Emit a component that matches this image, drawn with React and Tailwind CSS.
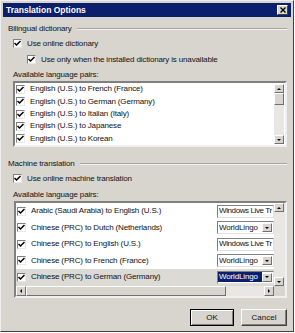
import React from "react";

const face = { fontFamily: '"Liberation Sans", Arial, sans-serif' };

const Check = ({ checked = true }) => (
  <span className="w-[9px] h-[9px] shrink-0 bg-white border border-t-[#808080] border-l-[#808080] border-b-[#e8e8e8] border-r-[#e8e8e8] flex items-center justify-center">
    {checked && (
      <svg width="7" height="7" viewBox="0 0 7 7">
        <path d="M0.5 3 L2.5 5 L6.5 1" stroke="#000" strokeWidth="1.5" fill="none" />
      </svg>
    )}
  </span>
);

const Arrow = ({ dir = "down" }) => {
  const d = {
    up: "M1 4 L3 2 L5 4 Z",
    down: "M1 2 L3 4 L5 2 Z",
    left: "M4 1 L2 3 L4 5 Z",
    right: "M2 1 L4 3 L2 5 Z",
  }[dir];
  return (
    <svg width="6" height="6" viewBox="0 0 6 6">
      <path d={d} fill="#000" />
    </svg>
  );
};

const SBtn = ({ dir, className = "" }) => (
  <div
    className={`w-[10px] h-[9px] bg-[#d8d5cf] border border-t-white border-l-white border-b-[#707070] border-r-[#707070] flex items-center justify-center ${className}`}
  >
    <Arrow dir={dir} />
  </div>
);

const GroupTitle = ({ text }) => (
  <div className="flex items-center gap-[5px] h-[12px]">
    <span className="text-[8px] text-[#111] whitespace-nowrap tracking-[-0.15px]">{text}</span>
    <div className="flex-1 flex flex-col">
      <div className="h-px bg-[#a8a6a0]" />
      <div className="h-px bg-[#f2f2f0]" />
    </div>
  </div>
);

const CheckRow = ({ label, className = "" }) => (
  <div className={`flex items-center gap-[5px] h-[13px] ${className}`}>
    <Check />
    <span className="text-[8px] text-[#111] whitespace-nowrap tracking-[-0.15px]">{label}</span>
  </div>
);

const dict = [
  "English (U.S.) to French (France)",
  "English (U.S.) to German (Germany)",
  "English (U.S.) to Italian (Italy)",
  "English (U.S.) to Japanese",
  "English (U.S.) to Korean",
];

const machine = [
  ["Arabic (Saudi Arabia) to English (U.S.)", "Windows Live Tr", false],
  ["Chinese (PRC) to Dutch (Netherlands)", "WorldLingo", true],
  ["Chinese (PRC) to English (U.S.)", "Windows Live Tr", false],
  ["Chinese (PRC) to French (France)", "WorldLingo", true],
  ["Chinese (PRC) to German (Germany)", "WorldLingo", true],
];

const Combo = ({ value, drop, selected }) => (
  <div className="w-[57px] h-[13px] bg-white border border-t-[#808080] border-l-[#808080] border-b-[#e0e0e0] border-r-[#e0e0e0] flex items-center">
    <span
      className={`text-[8px] whitespace-nowrap leading-[10px] px-[1px] ${
        drop ? "flex-1 tracking-[-0.15px]" : "tracking-[-0.4px]"
      } ${selected ? "bg-[#0a1f6e] text-white" : "text-[#111]"}`}
    >
      {value}
    </span>
    {drop && <SBtn dir="down" className="mr-[1px]" />}
  </div>
);

export default function App() {
  return (
    <div className="w-[295px] h-[333px] bg-white" style={face}>
      <div className="w-[294px] h-[332px] bg-[#d8d5cf] border border-t-[#eeeeee] border-l-[#eeeeee] border-b-[#404040] border-r-[#404040] p-[2px] flex flex-col">
        {/* title bar */}
        <div className="h-[14px] bg-[#0b1f6c] flex items-center justify-between pl-[3px] pr-[3px]">
          <span className="text-white font-bold text-[8.5px]">Translation Options</span>
          <div className="w-[11px] h-[10px] bg-[#d8d5cf] border border-t-white border-l-white border-b-[#404040] border-r-[#404040] flex items-center justify-center">
            <svg width="6" height="6" viewBox="0 0 6 6">
              <path d="M0.5 0.5 L5.5 5.5 M5.5 0.5 L0.5 5.5" stroke="#000" strokeWidth="1.4" />
            </svg>
          </div>
        </div>

        <div className="pl-[5px] pr-[4px] pt-[6px] flex flex-col">
          <GroupTitle text="Bilingual dictionary" />
          <CheckRow label="Use online dictionary" className="ml-[5px] mt-[2px]" />
          <CheckRow
            label="Use only when the installed dictionary is unavailable"
            className="ml-[19px] mt-[3px]"
          />
          <div className="ml-[5px] mt-[3px] text-[8px] text-[#111] h-[12px] leading-[12px] tracking-[-0.15px]">
            Available language pairs:
          </div>
          {/* list 1 */}
          <div className="ml-[5px] h-[66px] bg-white border-2 border-t-[#808080] border-l-[#808080] border-b-[#f0f0f0] border-r-[#f0f0f0] flex">
            <div className="flex-1 flex flex-col pl-[1px]">
              {dict.map((d) => (
                <CheckRow key={d} label={d} className="h-[12.6px]" />
              ))}
            </div>
            <div className="w-[10px] bg-[#e9e7e3] flex flex-col justify-between my-[1px] mr-[1px]">
              <div>
                <SBtn dir="up" />
                <div className="w-[10px] h-[12px] bg-[#d8d5cf] border border-t-white border-l-white border-b-[#707070] border-r-[#707070]" />
              </div>
              <SBtn dir="down" />
            </div>
          </div>

          <div className="mt-[11px]">
            <GroupTitle text="Machine translation" />
          </div>
          <CheckRow label="Use online machine translation" className="ml-[5px] mt-[2px]" />
          <div className="ml-[5px] mt-[4px] text-[8px] text-[#111] h-[12px] leading-[12px] tracking-[-0.15px]">
            Available language pairs:
          </div>
          {/* list 2 */}
          <div className="ml-[6px] h-[97px] bg-white border-2 border-t-[#808080] border-l-[#808080] border-b-[#f0f0f0] border-r-[#f0f0f0] flex flex-col">
            <div className="flex flex-1">
              <div className="flex-1 flex flex-col">
                {machine.map(([label, value, drop], i) => {
                  const sel = i === 4;
                  return (
                    <div
                      key={label}
                      className={`h-[16.5px] flex items-center justify-between pl-[1px] ${
                        sel ? "bg-[#dcdad5]" : ""
                      }`}
                    >
                      <CheckRow label={label} />
                      <Combo value={value} drop={drop} selected={sel} />
                    </div>
                  );
                })}
              </div>
              <div className="w-[11px] bg-[#e9e7e3] flex flex-col justify-between">
                <SBtn dir="up" />
                <SBtn dir="down" />
              </div>
            </div>
            <div className="h-[10px] flex bg-[#e9e7e3]">
              <div className="w-[10px] h-[10px] bg-[#d8d5cf] border border-t-white border-l-white border-b-[#707070] border-r-[#707070] flex items-center justify-center">
                <Arrow dir="left" />
              </div>
              <div className="w-[200px] h-[10px] bg-[#d8d5cf] border border-t-white border-l-white border-b-[#707070] border-r-[#707070]" />
              <div className="flex-1" />
              <div className="w-[10px] h-[10px] bg-[#d8d5cf] border border-t-white border-l-white border-b-[#707070] border-r-[#707070] flex items-center justify-center">
                <Arrow dir="right" />
              </div>
              <div className="w-[11px] bg-[#d8d5cf]" />
            </div>
          </div>

          {/* buttons */}
          <div className="flex justify-end gap-[7px] mt-[11px]">
            <button className="w-[44px] h-[17px] bg-[#d8d5cf] border border-black shadow-[inset_1px_1px_0_#fff,inset_-1px_-1px_0_#808080] text-[8px] text-[#111]">
              OK
            </button>
            <button className="w-[46px] h-[17px] bg-[#d8d5cf] border border-t-white border-l-white border-b-[#404040] border-r-[#404040] shadow-[inset_-1px_-1px_0_#808080] text-[8px] text-[#111]">
              Cancel
            </button>
          </div>
        </div>
      </div>
    </div>
  );
}
